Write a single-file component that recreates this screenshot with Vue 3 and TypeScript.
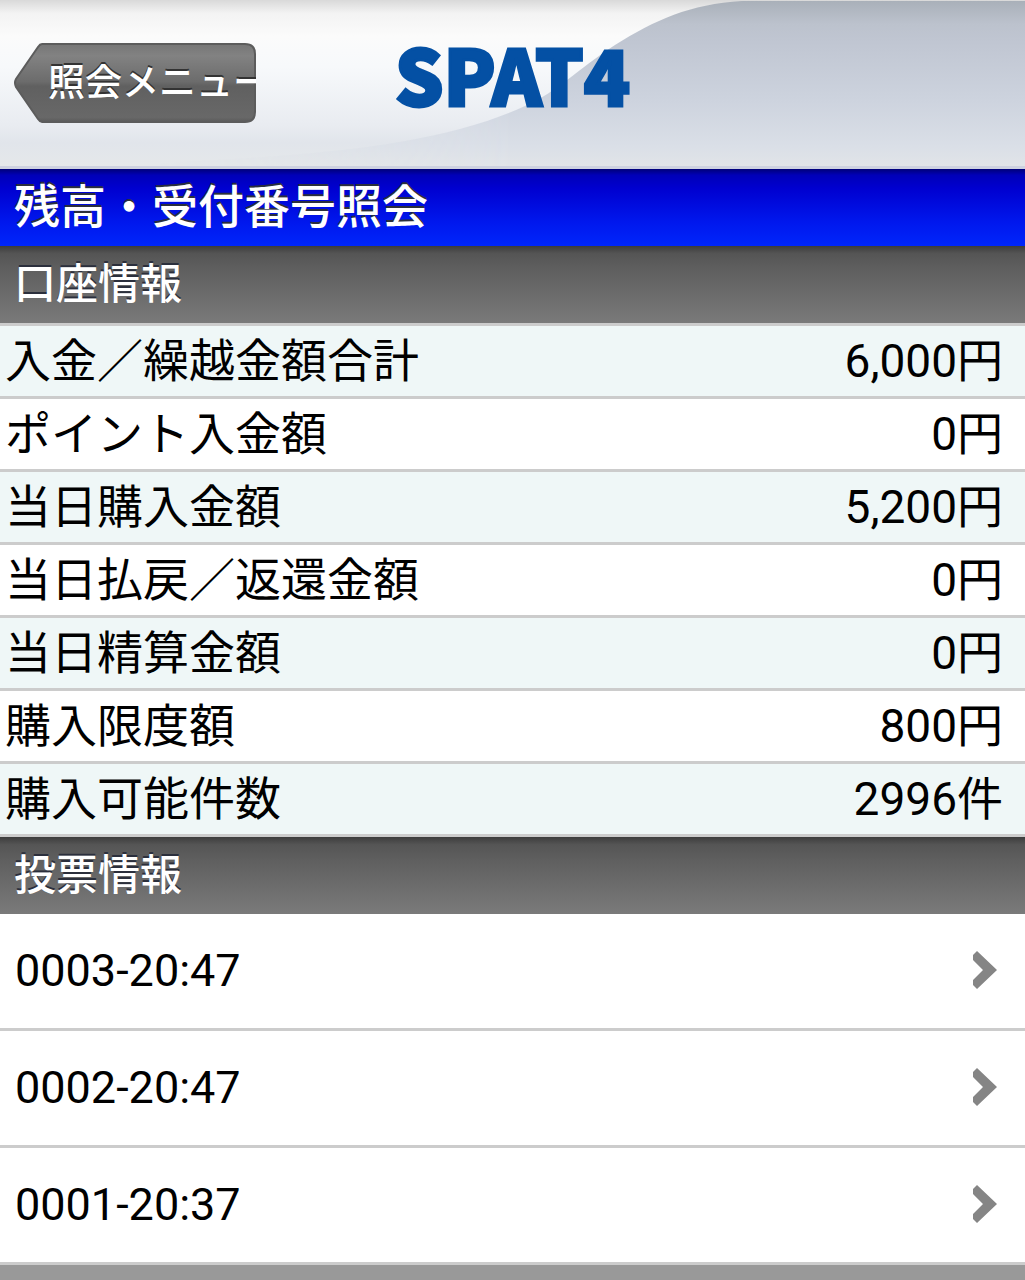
<script setup lang="ts">
interface AccountRow {
  label: string
  value: string
}

const accountRows: AccountRow[] = [
  { label: '入金／繰越金額合計', value: '6,000円' },
  { label: 'ポイント入金額', value: '0円' },
  { label: '当日購入金額', value: '5,200円' },
  { label: '当日払戻／返還金額', value: '0円' },
  { label: '当日精算金額', value: '0円' },
  { label: '購入限度額', value: '800円' },
  { label: '購入可能件数', value: '2996件' },
]

const bets: string[] = ['0003-20:47', '0002-20:47', '0001-20:37']
</script>

<template>
  <div class="page">
    <header class="top">
      <svg class="swoosh" viewBox="0 0 1025 166" preserveAspectRatio="none" aria-hidden="true">
        <defs>
          <linearGradient id="swooshFill" x1="0" y1="0" x2="0" y2="1">
            <stop offset="0" stop-color="#a9b0b9" />
            <stop offset="0.14" stop-color="#bcc2cd" />
            <stop offset="0.25" stop-color="#c0c6d2" />
            <stop offset="0.6" stop-color="#cdd3de" />
            <stop offset="0.88" stop-color="#dadfe7" />
            <stop offset="1" stop-color="#e1e4e8" />
          </linearGradient>
          <linearGradient id="swooshFade" x1="0" y1="0" x2="1" y2="0">
            <stop offset="0.15" stop-color="#fff" stop-opacity="0" />
            <stop offset="0.5" stop-color="#fff" stop-opacity="1" />
          </linearGradient>
          <mask id="swooshMask">
            <rect width="1025" height="166" fill="url(#swooshFade)" />
          </mask>
        </defs>
        <path
          d="M1025 1H742C690 4 655 20 615 45C575 71 560 90 525 106C465 134 380 150 250 158L120 166H1025Z"
          fill="url(#swooshFill)"
          mask="url(#swooshMask)"
        />
      </svg>
      <button class="back" type="button">
        <svg class="back-shape" viewBox="0 0 242 80" preserveAspectRatio="none" aria-hidden="true">
          <defs>
            <linearGradient id="backFill" x1="0" y1="0" x2="0" y2="1">
              <stop offset="0" stop-color="#767676" />
              <stop offset="0.15" stop-color="#828282" />
              <stop offset="0.48" stop-color="#6c6c6c" />
              <stop offset="0.54" stop-color="#606060" />
              <stop offset="0.94" stop-color="#686868" />
              <stop offset="1" stop-color="#5a5a5a" />
            </linearGradient>
          </defs>
          <path
            d="M28 1H231Q241 1 241 11V69Q241 79 231 79H28Q26 79 24 76L2 44Q0 40 2 36L24 4Q26 1 28 1Z"
            fill="url(#backFill)"
            stroke="#5c5c5c"
            stroke-width="2"
          />
        </svg>
        <span class="back-text">照会メニュー</span>
      </button>
      <div class="logo">SPAT4</div>
    </header>

    <main>
      <h1 class="bar title">残高・受付番号照会</h1>

      <h2 id="account" class="bar section">口座情報</h2>
      <table class="account" aria-labelledby="account">
        <tbody>
          <tr v-for="row in accountRows" :key="row.label">
            <th scope="row">{{ row.label }}</th>
            <td>{{ row.value }}</td>
          </tr>
        </tbody>
      </table>

      <h2 class="bar section">投票情報</h2>
      <ul class="bets">
        <li v-for="bet in bets" :key="bet">
          <a href="#">
            <span>{{ bet }}</span>
            <svg class="chevron" width="24" height="38" viewBox="0 0 24 38" aria-hidden="true">
              <path d="M0 9V4L4 0L24 19L4 38L0 34V29L10 19Z" fill="#858585" />
            </svg>
          </a>
        </li>
      </ul>
    </main>
  </div>
</template>

<style>
body {
  margin: 0;
  background: #999;
}
</style>

<style scoped>
.page {
  font-family: Roboto, "Noto Sans CJK JP", sans-serif;
  font-size: 46px;
  color: #000;
}

.top {
  position: relative;
  display: grid;
  grid-template-columns: 1fr auto 1fr;
  align-items: center;
  box-sizing: border-box;
  height: 169px;
  padding: 0 14px;
  border-bottom: 3px solid #cdd1e0;
  background: linear-gradient(#d9d9d9, #f3f3f3 8%, #fbfbfb 22%, #f7f9fb 40%, #e9ecf1 75%, #e1e5eb 86%, #e5e8ea);
}

.swoosh {
  position: absolute;
  inset: 0;
  width: 100%;
  height: 100%;
}

.back {
  position: relative;
  justify-self: start;
  width: 242px;
  height: 80px;
  padding: 0 0 6px 34px;
  border: 0;
  background: none;
  overflow: hidden;
  font: inherit;
  font-size: 37px;
  font-weight: 500;
  text-align: left;
  white-space: nowrap;
  color: #fff;
  text-shadow: 0 -2px 0 #333;
}

.back-shape {
  position: absolute;
  inset: 0;
  width: 100%;
  height: 100%;
}

.back-text {
  position: relative;
}

.logo {
  position: relative;
  grid-column: 2;
  padding-bottom: 20px;
  font-family: "Noto Sans CJK JP", sans-serif;
  font-size: 76px;
  font-weight: 900;
  line-height: 80px;
  color: #0450a4;
  -webkit-text-stroke: 3px #0450a4;
}

.bar {
  box-sizing: border-box;
  height: 77px;
  margin: 0;
  padding: 0 14px;
  line-height: 77px;
  font-weight: 500;
  color: #fff;
  text-shadow: 0 -2px 0 #2b2f3c;
}

.title {
  font-size: 46px;
  background: linear-gradient(#000078, #0000b8 8%, #0000d0 25%, #0018ee 70%, #0026fa);
}

.section {
  font-size: 42px;
  background: linear-gradient(#3c3c3c, #555 10%, #5f5f5f 30%, #7a7a7a);
}

.account {
  width: 100%;
  border-collapse: collapse;
  border-top: 3px solid #ccc;
}

.account tr {
  height: 73px;
  background: #fff;
  box-shadow: inset 0 -3px #ccc;
}

.account tr:nth-child(odd) {
  background: #eff7f7;
}

.account th,
.account td {
  padding: 0 22px 3px 5px;
  line-height: 70px;
  font-weight: 400;
  text-align: left;
}

.account td {
  text-align: right;
}

.bets {
  margin: 0;
  padding: 0;
  list-style: none;
}

.bets a {
  display: flex;
  align-items: center;
  justify-content: space-between;
  height: 112px;
  padding: 0 28px 2px 15px;
  border-bottom: 3px solid #ccc;
  background: #fff;
  font-size: 45px;
  color: inherit;
  text-decoration: none;
}
</style>
